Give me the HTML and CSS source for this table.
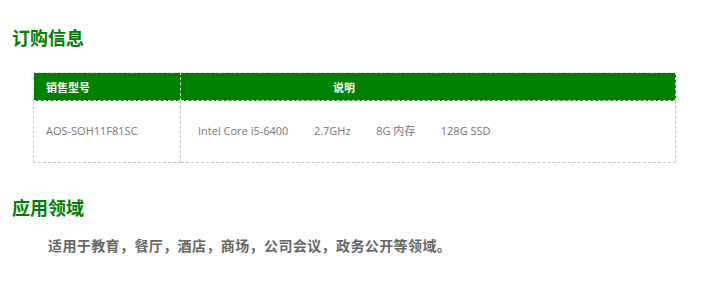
FILE: index.html
```html
<!DOCTYPE html>
<html lang="zh-CN">
<head>
<meta charset="utf-8">
<title>订购信息</title>
<link rel="stylesheet" href="styles.css">
</head>
<body>
<section class="block">
  <h2 class="title">订购信息</h2>
  <table class="spec">
    <thead>
      <tr>
        <th class="col-model">销售型号</th>
        <th class="col-desc">说明</th>
      </tr>
    </thead>
    <tbody>
      <tr>
        <td class="col-model">AOS-SOH11F81SC</td>
        <td class="col-desc"><span class="item">Intel Core i5-6400</span><span class="item">2.7GHz</span><span class="item">8G 内存</span><span class="item">128G SSD</span></td>
      </tr>
    </tbody>
  </table>
</section>
<section class="block">
  <h2 class="title">应用领域</h2>
  <p class="text">适用于教育，餐厅，酒店，商场，公司会议，政务公开等领域。</p>
</section>
</body>
</html>
```

FILE: styles.css
```css
html, body {
  margin: 0;
  padding: 0;
  background: #fff;
}

body {
  font-family: "Open Sans", "Noto Sans CJK SC", sans-serif;
  color: #666;
  padding: 26px 12px 0 12px;
}

.block {
  margin: 0;
}

.title {
  margin: 0;
  font-family: "Noto Sans CJK SC", sans-serif;
  font-size: 18px;
  line-height: 22px;
  font-weight: 700;
  color: #008000;
}

.spec {
  margin: 24px 0 0 21px;
  width: 643px;
  border-collapse: collapse;
  font-size: 11px;
}

.spec th {
  background: #008000;
  color: #fff;
  font-family: "Noto Sans CJK SC", sans-serif;
  font-weight: 700;
  height: 27px;
  padding: 0;
  border: 1px dashed #e0e0e0;
}

.spec td {
  height: 58px;
  padding: 0 0 3px 0;
  border: 1px dashed #c8c8c8;
  color: #777;
}

.spec th.col-model,
.spec td.col-model {
  width: 134px;
  text-align: left;
  padding-left: 12px;
}

/* header label sits left of the column centre */
.spec th.col-desc {
  text-align: center;
  padding-right: 168px;
}

.spec td.col-desc {
  padding-left: 17px;
}

.item {
  margin-right: 25.5px;
}

.text {
  margin: 17px 0 0 36px;
  font-family: "Noto Sans CJK SC", sans-serif;
  font-size: 14px;
  line-height: 20px;
  font-weight: 700;
  letter-spacing: 0.4px;
  color: #666;
}

.block + .block {
  margin-top: 33px;
}
```
